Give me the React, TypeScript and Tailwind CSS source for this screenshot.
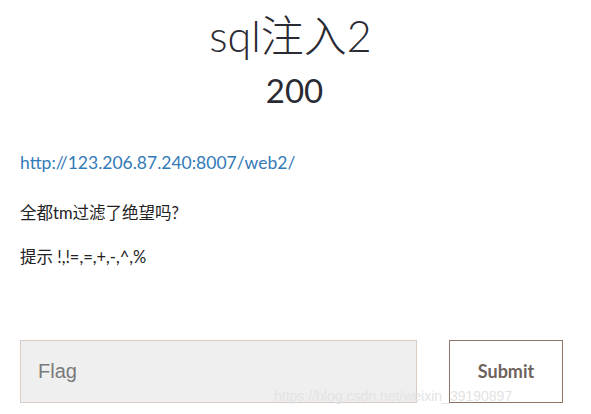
import React from 'react';

const App: React.FC = () => {
  return (
    <div className="relative w-[591px] h-[414px] bg-white overflow-hidden font-['Lato','Noto_Sans_CJK_SC',sans-serif] text-[#222]">
      <div className="text-center pt-[10px] pr-[10px]">
        <h1 className="text-[43px] leading-[52px] font-light text-[#2a2a33]">sql注入2</h1>
        <h2 className="text-[33px] leading-[40px] mt-[8px] font-normal text-[#2a2a33] pl-[8px]">200</h2>
      </div>

      <div className="px-[20px] mt-[42px] text-[17.5px] leading-[22px]">
        <a className="text-[#337ab7]" href="#">http://123.206.87.240:8007/web2/</a>
        <p className="mt-[28px] text-[16.5px]">全都tm过滤了绝望吗?</p>
        <p className="mt-[22px] text-[16.5px]">提示 !,!=,=,+,-,^,%</p>
      </div>

      <div className="flex px-[20px] mt-[72px] gap-[32px]">
        <input
          className="w-[397px] h-[63px] bg-[#efefef] border border-[#d9cdc6] px-[17px] text-[20px] placeholder:text-[#7a7a7a] font-['Liberation_Sans',sans-serif] outline-none"
          placeholder="Flag"
        />
        <button className="w-[114px] h-[63px] border border-[#8e7566] text-[18px] font-bold text-[#6e625c]">
          Submit
        </button>
      </div>

      <div className="absolute left-[274px] top-[388px] text-[14px] leading-[16px] text-[#e3e3e3] font-['Liberation_Sans',sans-serif]">
        https://blog.csdn.net/weixin_39190897
      </div>
    </div>
  );
};

export default App;
